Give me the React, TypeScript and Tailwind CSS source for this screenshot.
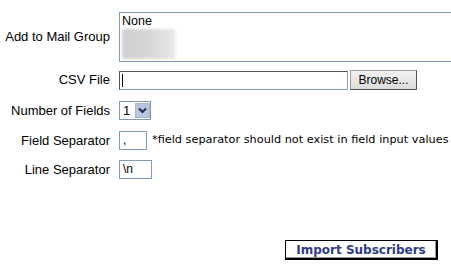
import React from 'react';

const label = 'w-[110px] shrink-0 text-right text-[13px] text-black';

function Row({ title, h, children, className }: { title: string; h: string; children: React.ReactNode; className?: string }) {
  return (
    <div className={`flex items-center ${h} ${className ?? ''}`}>
      <div className={label}>{title}</div>
      <div className="ml-[9px] flex items-center">{children}</div>
    </div>
  );
}

export default function App() {
  return (
    <div className="w-[451px] h-[268px] overflow-hidden bg-white pt-[12px] font-['Liberation_Sans',Arial,sans-serif] text-black">
      <Row title="Add to Mail Group" h="h-[50px]">
        <div className="w-[340px] h-[50px] border border-[#7f9db9] bg-white px-[2px] pt-[1px]">
          <div className="text-[12.5px] leading-[14px]">None</div>
          <div className="mt-[1px] w-[53px] h-[30px] bg-gradient-to-r from-[#cfcfcf] via-[#d6d6d6] to-[#e8e8e8] blur-[1.5px]" />
        </div>
      </Row>

      <Row title="CSV File" h="h-[20px]" className="mt-[8px]">
        <div className="w-[229px] h-[19px] border border-[#7f9db9] border-t-[#555] border-l-[#555] bg-white flex items-center pl-[2px]">
          <div className="w-px h-[13px] bg-black" />
        </div>
        <div className="ml-[2px] w-[67px] h-[20px] border border-[#9a9a9a] border-r-[#555] border-b-[#555] bg-gradient-to-b from-[#f2f2f2] to-[#dcdcdc] text-[12px] flex items-center justify-center">
          Browse...
        </div>
      </Row>

      <Row title="Number of Fields" h="h-[19px]" className="mt-[11px]">
        <div className="w-[32px] h-[19px] border border-[#7f9db9] bg-white flex items-center">
          <span className="text-[13px] pl-[3px] w-[15px]">1</span>
          <div className="w-[15px] h-[15px] bg-[#b8c6de] border border-[#a8b6cf] flex items-center justify-center">
            <svg width="9" height="7" viewBox="0 0 9 7">
              <path d="M1 1.5 L4.5 5 L8 1.5" stroke="#1e2a55" strokeWidth="2" fill="none" />
            </svg>
          </div>
        </div>
      </Row>

      <Row title="Field Separator" h="h-[19px]" className="mt-[11px]">
        <div className="w-[28px] h-[19px] border border-[#7f9db9] bg-white text-[12px] pl-[3px] leading-[17px]">,</div>
        <span className="ml-[5px] text-[11.3px] font-['DejaVu_Sans',Verdana,sans-serif] whitespace-nowrap">
          *field separator should not exist in field input values
        </span>
      </Row>

      <Row title="Line Separator" h="h-[19px]" className="mt-[10px]">
        <div className="w-[33px] h-[19px] border border-[#7f9db9] bg-white text-[12px] pl-[3px] leading-[17px]">\n</div>
      </Row>

      <div className="mt-[61px] flex justify-end pr-[13px]">
        <div className="w-[153px] h-[20px] border border-black border-r-2 border-b-2 bg-white flex items-center justify-center text-[12px] font-bold text-[#2e3a8c] font-['DejaVu_Sans',Verdana,sans-serif] shadow-[inset_-1px_-1px_0_#999]">
          Import Subscribers
        </div>
      </div>
    </div>
  );
}
